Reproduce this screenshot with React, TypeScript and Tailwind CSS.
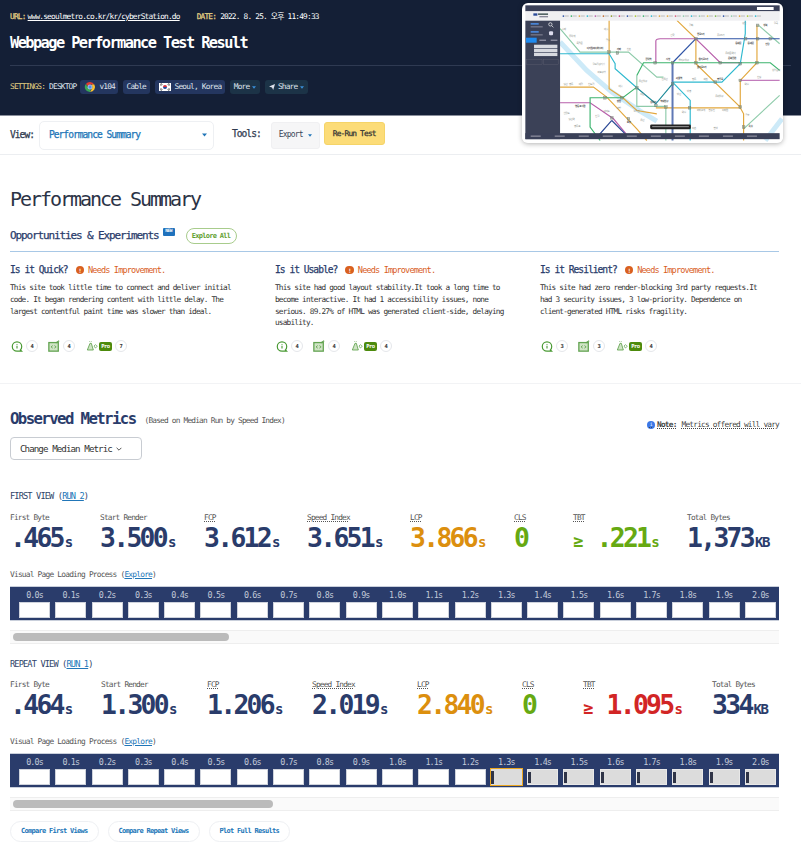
import React from "react";

const Chrome = () => (
  <svg viewBox="0 0 24 24" className="w-[12px] h-[12px]">
    <path d="M12 2a10 10 0 0 1 8.7 5H12a5 5 0 0 0-4.6 3L3.8 5.8A10 10 0 0 1 12 2z" fill="#e33b2e" />
    <path d="M20.7 7A10 10 0 0 1 12 22l4.3-7.5A5 5 0 0 0 16.3 9.5L15.5 7z" fill="#fbc02d" />
    <path d="M12 22A10 10 0 0 1 3.8 5.8l4.3 7.7A5 5 0 0 0 13.5 17z" fill="#3ba755" />
    <circle cx="12" cy="12" r="4.2" fill="#4a8df0" stroke="#fff" strokeWidth="1.2" />
  </svg>
);

const Flag = () => (
  <svg viewBox="0 0 24 16" className="w-[12px] h-[8px]">
    <rect width="24" height="16" fill="#fff" />
    <path d="M8 8a4 4 0 0 1 8 0z" fill="#d32f3f" />
    <path d="M8 8a4 4 0 0 0 8 0z" fill="#1f4a9c" />
    <path d="M2 3l4-2M3 5l4-2M18 1l4 2M17 3l4 2M2 13l4 2M3 11l4 2M18 15l4-2M17 13l4-2" stroke="#111" strokeWidth="1.2" />
  </svg>
);

const Caret = ({ className }: { className: string }) => (
  <svg viewBox="0 0 10 6" className={className}>
    <path d="M0 0h10L5 6z" fill="currentColor" />
  </svg>
);

const IconInfo = () => (
  <svg viewBox="0 0 14 14" className="w-[12px] h-[13px]" fill="none" stroke="#4a9a34">
    <path d="M11.5 12.5H7a5.5 5.5 0 1 1 5.5-5.5c0 2-.4 3-1.5 4l1.5 1.5z" strokeWidth="1.4" />
    <path d="M7 6.2v3.2M7 4v1" strokeWidth="1.3" />
  </svg>
);

const IconCode = () => (
  <svg viewBox="0 0 14 14" className="w-[12px] h-[12px]" fill="none" stroke="#62a350">
    <rect x="1" y="3" width="11" height="10" strokeWidth="1.5" fill="#cfe4c5" />
    <path d="M5.5 6.5 3.5 8l2 1.5M7.5 6.5l2 1.5-2 1.5" strokeWidth="1" />
    <path d="M9 3.5 13 .8" strokeWidth="1.4" />
  </svg>
);

const IconCone = () => (
  <svg viewBox="0 0 18 16" className="w-[12px] h-[12px]" fill="none" stroke="#62a350">
    <path d="M6 4 2 14h9L8 4z" strokeWidth="1.3" fill="#cfe4c5" />
    <path d="M5 1l1 1M8 .8 7.6 2" strokeWidth="1" />
    <path d="M12 8l2-2 3 2.5-3 2.5z" strokeWidth="1.1" />
  </svg>
);

const Count = ({ n }: { n: number }) => (
  <span className="w-[12px] h-[12px] rounded-full border border-[#e5e7eb] flex items-center justify-center text-[5.5px] font-bold text-[#333]">{n}</span>
);

const Badge = () => (
  <span className="w-[8.5px] h-[8.5px] rounded-full bg-[#d9601f] text-white flex items-center justify-center text-[6px] font-bold">!</span>
);

const insights = [
  {
    title: "Is it Quick?",
    body: "This site took little time to connect and deliver initial code. It began rendering content with little delay. The largest contentful paint time was slower than ideal.",
    c: [4, 4, 7],
  },
  {
    title: "Is it Usable?",
    body: "This site had good layout stability.It took a long time to become interactive. It had 1 accessibility issues, none serious. 89.27% of HTML was generated client-side, delaying usability.",
    c: [4, 4, 4],
  },
  {
    title: "Is it Resilient?",
    body: "This site had zero render-blocking 3rd party requests.It had 3 security issues, 3 low-priority. Dependence on client-generated HTML risks fragility.",
    c: [3, 3, 4],
  },
];

type M = { label: string; value: string; unit: string; color: string; w: string; dotted?: boolean; prefix?: string };

const NAVY = "text-[#2a3c6b]";
const first: M[] = [
  { label: "First Byte", value: ".465", unit: "s", color: NAVY, w: "w-[90px]" },
  { label: "Start Render", value: "3.500", unit: "s", color: NAVY, w: "w-[104px]" },
  { label: "FCP", value: "3.612", unit: "s", color: NAVY, w: "w-[103px]", dotted: true },
  { label: "Speed Index", value: "3.651", unit: "s", color: NAVY, w: "w-[103px]", dotted: true },
  { label: "LCP", value: "3.866", unit: "s", color: "text-[#dc8f0e]", w: "w-[104px]", dotted: true },
  { label: "CLS", value: "0", unit: "", color: "text-[#66a912]", w: "w-[59px]", dotted: true },
  { label: "TBT", value: ".221", unit: "s", color: "text-[#66a912]", w: "w-[114px]", dotted: true, prefix: "mr-[15px]" },
  { label: "Total Bytes", value: "1,373", unit: "KB", color: NAVY, w: "w-[90px]" },
];
const repeat: M[] = [
  { label: "First Byte", value: ".464", unit: "s", color: NAVY, w: "w-[91px]" },
  { label: "Start Render", value: "1.300", unit: "s", color: NAVY, w: "w-[106px]" },
  { label: "FCP", value: "1.206", unit: "s", color: NAVY, w: "w-[105px]", dotted: true },
  { label: "Speed Index", value: "2.019", unit: "s", color: NAVY, w: "w-[105px]", dotted: true },
  { label: "LCP", value: "2.840", unit: "s", color: "text-[#dc8f0e]", w: "w-[105px]", dotted: true },
  { label: "CLS", value: "0", unit: "", color: "text-[#66a912]", w: "w-[61px]", dotted: true },
  { label: "TBT", value: "1.095", unit: "s", color: "text-[#d22525]", w: "w-[129px]", dotted: true, prefix: "mr-[15px]" },
  { label: "Total Bytes", value: "334", unit: "KB", color: NAVY, w: "w-[70px]" },
];

const Metrics = ({ items }: { items: M[] }) => (
  <div className="flex">
    {items.map((m) => (
      <div key={m.label} className={`${m.w} shrink-0`}>
        <div className="h-[11px] leading-[11px] text-[7.8px] text-[#555]">
          <span className={m.dotted ? "underline decoration-dotted" : ""}>{m.label}</span>
        </div>
        <div className={`${m.color} h-[33px] leading-[29px] font-bold text-[26.4px] whitespace-nowrap`}>
          {m.prefix && <span className={`text-[17px] ${m.prefix}`}>≥</span>}
          <span>{m.value}</span>
          {m.unit && <span className="text-[14px] ml-[2px]">{m.unit}</span>}
        </div>
      </div>
    ))}
  </div>
);

const times = Array.from({ length: 21 }, (_, i) => (i / 10).toFixed(1) + "s");

const Film = ({ changeAt }: { changeAt?: number }) => (
  <div className="h-[35px] bg-[#2a3c6b] pl-[9px] flex gap-[5.3px] pt-[3px] border-y border-[#c9cfdb]">
    {times.map((t, i) => {
      const changed = changeAt !== undefined && i >= changeAt;
      const hi = changeAt === i;
      return (
        <div key={t} className="w-[31px] shrink-0 flex flex-col items-center">
          <span className="h-[12px] leading-[11px] text-[8.4px] text-[#c3cad9]">{t}</span>
          <div
            className={
              hi
                ? "w-[33px] h-[18px] -mt-[1px] border border-[#eba620] bg-[#dcdcdc] flex"
                : changed
                ? "w-[31px] h-[16px] border border-[#e8e8e8] bg-[#dcdcdc] flex"
                : "w-[31px] h-[16px] border border-[#cfd3dc] bg-white"
            }
          >
            {changed && <div className="w-[3px] mt-[2px] mb-[1px] bg-[#2f3447]" />}
          </div>
        </div>
      );
    })}
  </div>
);

const Scroll = ({ thumb }: { thumb: string }) => (
  <div className="mt-[9px] h-[14px] bg-[#fafafa] border-y border-[#eeeeee] pl-[3px] flex items-center">
    <div className={`${thumb} h-[8px] rounded-full bg-[#bbbbbb]`} />
  </div>
);

const labels: [number, number, string, boolean?][] = [
  [260, 145, "디지털미디어시티", true], [350, 148, "가좌", true], [380, 150, "신촌"], [435, 180, "공덕역", true],
  [497, 180, "시청", true], [535, 182, "을지로입구"], [595, 180, "을지로3가", true], [590, 105, "종로3가", true],
  [650, 108, "종로5가"], [705, 130, "동대문", true], [742, 130, "동대문", true], [795, 133, "신당", true],
  [675, 162, "동대문역사"], [683, 175, "문화공원", true], [590, 203, "을지로4가", true], [650, 238, "충무로", true],
  [575, 240, "명동"], [610, 240, "회현"], [527, 237, "서울역", true], [416, 245, "용산입구"], [484, 240, "신용산"],
  [733, 255, "약수"], [770, 232, "신당"], [815, 212, "상왕십리"], [277, 195, "월드컵경기장"], [292, 218, "마포구청"],
  [190, 254, "당산"], [207, 254, "영등"], [236, 254, "대림"], [264, 254, "신도림"],
  [350, 305, "합정", true], [355, 260, "대흥"], [420, 285, "이촌"], [450, 308, "삼각지", true], [480, 305, "숙대입구", true],
  [400, 335, "노량진"], [545, 337, "약수"], [590, 333, "버티고개"], [625, 333, "한강진"], [665, 333, "이태원"],
  [645, 290, "동대입구"], [560, 275, "남영"], [530, 285, "남산"], [225, 320, "영등포시장", true], [310, 335, "여의도"],
  [350, 325, "대방"], [285, 350, "신길"], [380, 368, "효창", true], [420, 362, "용산"], [640, 387, "한남"], [735, 348, "금호"],
  [575, 387, "이촌"], [745, 380, "옥수", true], [190, 340, "선유도"], [205, 358, "당산역"],
  [222, 380, "영등포"], [185, 90, "홍제"], [207, 110, "무악재"], [229, 130, "독립문"], [312, 90, "대흥"], [317, 122, "공덕"],
  [566, 78, "광화"], [510, 107, "안국"], [725, 70, "성신"], [789, 78, "성북", true], [820, 72, "월곡"],
];

const MapShot = () => (
  <svg viewBox="66 8 782 418" className="w-full h-full block" fill="none">
    <rect x="66" y="8" width="782" height="418" fill="#fff" />
    <path d="M180 125 L260 210 L335 275 L420 332 L470 362" stroke="#cdeaf8" strokeWidth="15" />
    <path d="M845 355 L795 420" stroke="#cdeaf8" strokeWidth="15" />
    <g strokeWidth="3.5">
      <path d="M180 85 L240 155 H385 L470 230 H490" stroke="#8ecbaa" />
      <path d="M410 225 V318 H497 V420" stroke="#8ecbaa" />
      <path d="M730 385 L838 285" stroke="#8ecbaa" />
      <path d="M775 75 L838 130" stroke="#8ecbaa" />
      <path d="M327 60 V265 L368 292 L410 330 L470 340" stroke="#e2a83e" />
      <path d="M180 260 H280 L320 290 L410 385 L440 420" stroke="#e2a83e" />
      <path d="M530 60 L587 115 V190 L720 320 V240 L770 187 V75" stroke="#e2a83e" />
      <path d="M467 322 H720 L730 340 V420" stroke="#e2a83e" />
      <path d="M587 115 H838" stroke="#2d52a5" />
      <path d="M587 115 L517 187" stroke="#2d52a5" />
      <path d="M517 187 V420" stroke="#5f78b5" strokeWidth="6" />
      <path d="M467 187 V122 Q467 115 480 115 H587 L660 187 H725" stroke="#b85fab" />
      <path d="M720 240 H838" stroke="#c27cbc" />
      <path d="M180 307 H270 L340 355 L378 400" stroke="#b85fab" />
      <path d="M410 225 L430 187 H810 L838 210" stroke="#3cb46e" />
      <path d="M410 260 L368 292 H270 V380 L300 420" stroke="#3cb46e" />
      <path d="M180 160 H327 L345 190 V205 L410 262" stroke="#2fb9cf" />
      <path d="M517 245 H665 L720 190 L735 100 V60" stroke="#2fb9cf" />
      <path d="M517 245 L570 300 V420" stroke="#2fb9cf" />
      <path d="M410 262 L467 310 L517 250" stroke="#1d8a99" />
      <path d="M335 360 L298 402 M335 360 L375 400" stroke="#2d4a96" />
    </g>
    <g fill="#7c8a7c" stroke="#6a756a" strokeWidth="1">
      {[[327,155],[352,158],[410,262],[465,187],[517,187],[587,115],[587,187],[660,187],[720,190],[770,187],[736,115],[772,115],[810,115],[720,240],[645,245],[517,250],[467,315],[497,320],[568,322],[720,320],[730,380],[365,292],[315,292],[335,352],[385,355],[772,75]].map(([x, y], i) => (
        <rect key={i} x={x - 4} y={y - 4} width="8" height="8" fillOpacity=".55" />
      ))}
    </g>
    <g style={{ fontFamily: "'Noto Sans CJK KR', sans-serif" }}>
      {labels.map(([x, y, t, b], i) => (
        <text key={i} x={x} y={y} fontSize="7.5" fontWeight={b ? 700 : 400} fill={b ? "#444" : "#8a8f8a"}>{t}</text>
      ))}
    </g>
    <rect x="76" y="15" width="762" height="18" fill="#3a4058" />
    <rect x="770" y="20" width="50" height="9" fill="#fff" />
    <rect x="76" y="33" width="762" height="28" fill="#f0f0f2" />
    <rect x="100" y="39" width="12" height="7" fill="#2a4a98" />
    <rect x="114" y="39" width="30" height="5" fill="#566" />
    <rect x="118" y="47" width="26" height="4" fill="#889" />
    {["#2d52a5","#3cb46e","#e2a83e","#2fb9cf","#b85fab","#c0692c","#8a9a2a","#c8447a","#2d52a5","#a8c830","#3cb46e","#2fb9cf","#e2a83e","#e2a83e","#d95c7a","#8ecbaa","#2fb9cf","#8ecbaa","#e2c83e","#7ab648","#2d52a5","#8ecbaa","#e2a83e","#a8c830","#2fb9cf"].map((c, i) => (
      <g key={i}>
        <circle cx={190 + i * 24} cy="47" r="2.6" fill={c} />
        <rect x={194 + i * 24} y="45.5" width="12" height="3" fill="#bbb" />
      </g>
    ))}
    <rect x="76" y="61" width="104" height="355" fill="#3b4157" />
    <rect x="92" y="68" width="24" height="5" fill="#4a86d8" />
    <rect x="92" y="78" width="36" height="3" fill="#889" />
    <rect x="92" y="92" width="24" height="5" fill="#4a86d8" />
    <rect x="92" y="102" width="36" height="3" fill="#889" />
    <circle cx="151" cy="72" r="5" stroke="#fff" strokeWidth="2" />
    <path d="M155 76l5 5" stroke="#fff" strokeWidth="2" />
    <rect x="147" y="93" width="12" height="12" rx="3" fill="#dde" />
    <rect x="78" y="112" width="32" height="15" fill="#1f8bf0" />
    <rect x="118" y="118" width="20" height="3" fill="#aab" />
    <rect x="152" y="118" width="20" height="3" fill="#aab" />
    <rect x="102" y="133" width="70" height="10" fill="#d8dae0" />
    <rect x="102" y="145" width="70" height="10" fill="#d8dae0" />
    <rect x="102" y="157" width="70" height="10" fill="#d8dae0" />
    <rect x="80" y="178" width="46" height="14" stroke="#667" />
    <rect x="130" y="178" width="46" height="14" stroke="#667" />
    <rect x="76" y="398" width="762" height="18" fill="#3a4058" />
    {Array.from({ length: 10 }, (_, i) => (
      <rect key={i} x={92 + i * 72} y="405" width="30" height="4" fill="#889" />
    ))}
    <rect x="450" y="372" width="122" height="14" rx="4" fill="#222" />
    <rect x="456" y="377" width="110" height="3" fill="#999" />
  </svg>
);

const Pill = ({ children }: { children: React.ReactNode }) => (
  <span className="h-[21px] px-[10px] rounded-full border border-[#eef0f3] flex items-center text-[7px] font-bold text-[#2176b8]">{children}</span>
);

const STROKE = "[-webkit-text-stroke:0.25px_currentColor]";

export default function App() {
  return (
    <div className="relative w-[801px] h-[846px] overflow-hidden bg-white font-['DejaVu_Sans_Mono','Noto_Sans_CJK_KR',monospace] [&_*]:tracking-[-0.102em]">
      <header className="h-[116px] bg-[#141f36] border-b border-[#8a8f9c] px-[10px]">
        <div className="pt-[12px] h-[29px] flex text-[7.8px] leading-[10px] text-white">
          <span className={`text-[#e6d284] ${STROKE}`}>URL:</span>
          <a className="underline ml-[2px]">www.seoulmetro.co.kr/kr/cyberStation.do</a>
          <span className={`text-[#e6d284] ml-[17px] ${STROKE}`}>DATE:</span>
          <span className="ml-[4px]">2022. 8. 25. 오후 11:49:33</span>
        </div>
        <h1 className="text-[15.3px] leading-[28px] font-bold text-white">Webpage Performance Test Result</h1>
        <div className="mt-[8px] h-px bg-[#2f3a52]" />
        <div className="mt-[14px] flex items-center text-[7.8px] text-[#dfe3ec]">
          <span className="text-[#e6d284]">SETTINGS:</span>
          <span className="ml-[4px]">DESKTOP</span>
          <span className="ml-[4px] h-[14px] pl-[4px] pr-[3px] rounded-[3px] bg-[#24365f] flex items-center gap-[3px]"><Chrome /><span>v104</span></span>
          <span className="ml-[5px] h-[14px] px-[3.5px] rounded-[3px] bg-[#24365f] flex items-center">Cable</span>
          <span className="ml-[5px] h-[14px] px-[4px] rounded-[3px] bg-[#24365f] flex items-center gap-[4px]"><Flag /><span>Seoul, Korea</span></span>
          <span className="ml-[5px] h-[14px] px-[3.5px] rounded-[3px] bg-[#1c3347] flex items-center gap-[3px]"><span>More</span><Caret className="w-[4px] h-[3px] text-[#3a8fd8]" /></span>
          <span className="ml-[5px] h-[14px] px-[4px] rounded-[3px] bg-[#1c3347] flex items-center gap-[3px]">
            <svg viewBox="0 0 10 10" className="w-[6px] h-[6px]"><path d="M0 4 10 0 7 10 5 6z" fill="#dfe3ec" /></svg>
            <span>Share</span>
            <Caret className="w-[4px] h-[3px] text-[#3a8fd8]" />
          </span>
        </div>
      </header>

      <div className="absolute left-[522px] top-[3px] w-[261px] h-[139.5px] rounded-[6px] overflow-hidden shadow-[0_1px_5px_rgba(0,0,0,0.3)]">
        <MapShot />
      </div>

      <nav className="h-[39px] border-b border-[#eceef1] px-[10px] flex items-center">
        <span className={`text-[9.6px] text-[#2f3a4f] ${STROKE}`}>View:</span>
        <div className="ml-[5px] w-[175px] h-[29px] rounded-[5px] border border-[#eef0f3] flex items-center justify-between pl-[9px] pr-[6px]">
          <span className={`text-[9.6px] text-[#2176b8] ${STROKE}`}>Performance Summary</span>
          <Caret className="w-[5px] h-[4px] text-[#2176b8]" />
        </div>
        <span className={`ml-[18px] -mt-[2px] text-[9.6px] text-[#2f3a4f] ${STROKE}`}>Tools:</span>
        <div className="ml-[10px] w-[49px] h-[27px] rounded-[3px] bg-[#f6f6f7] border border-[#f0f0f2] flex items-center justify-center gap-[5px]">
          <span className="text-[8px] text-[#3a4658]">Export</span>
          <Caret className="w-[4px] h-[3px] text-[#2176b8]" />
        </div>
        <div className={`ml-[4px] w-[61px] h-[23px] -mt-[3px] rounded-[3px] bg-[#fcdc78] border border-[#f5d468] flex items-center justify-center text-[7.8px] text-[#333] ${STROKE}`}>Re-Run Test</div>
      </nav>

      <main className="px-[10px]">
        <h2 className="mt-[30px] h-[28px] leading-[28px] text-[20px] text-[#2b3346]">Performance Summary</h2>
        <div className="mt-[11px] h-[24px] flex items-center">
          <h3 className={`text-[11px] ${STROKE} ${NAVY}`}>Opportunities &amp; Experiments</h3>
          <span className="ml-[4px] -mt-[9px] w-[12px] h-[8px] rounded-[1px] bg-[#1f72bd] text-white text-[4.5px] font-bold flex items-center justify-center">NEW</span>
          <span className="ml-[11px] h-[16px] w-[51px] rounded-full border border-[#a8cc8c] flex items-center justify-center text-[7px] font-bold text-[#5f9e2f]">Explore All</span>
        </div>
        <div className="mt-[3px] w-[769px] h-px bg-[#a8c8e6]" />
        <div className="grid grid-cols-[265px_265px_239px] w-[769px]">
          {insights.map((s) => (
            <section key={s.title}>
              <div className="mt-[12px] h-[12px] flex items-center">
                <span className={`text-[9.6px] ${STROKE} ${NAVY}`}>{s.title}</span>
                <span className="ml-[8px]"><Badge /></span>
                <span className="ml-[4px] text-[8.6px] text-[#d9601f]">Needs Improvement.</span>
              </div>
              <p className="mt-[6px] w-[231px] h-[47px] text-[7.76px] leading-[11.8px] text-[#333]">{s.body}</p>
              <div className="mt-[10px] h-[14px] flex items-center">
                <span className="ml-[1px]"><IconInfo /></span>
                <span className="ml-[3px]"><Count n={s.c[0]} /></span>
                <span className="ml-[10px]"><IconCode /></span>
                <span className="ml-[3px]"><Count n={s.c[1]} /></span>
                <span className="ml-[11px]"><IconCone /></span>
                <span className="ml-[1px] w-[13px] h-[9px] rounded-[2px] bg-[#4c8a0c] text-white text-[5.5px] font-bold flex items-center justify-center">Pro</span>
                <span className="ml-[3px]"><Count n={s.c[2]} /></span>
              </div>
            </section>
          ))}
        </div>
      </main>

      <div className="mt-[30px] h-px bg-[#f2f3f5]" />

      <section className="relative px-[10px]">
        <div className="mt-[25px] h-[20px] flex items-center">
          <h2 className={`text-[15.7px] font-bold ${NAVY}`}>Observed Metrics</h2>
          <span className="ml-[9px] mt-[3px] text-[7.8px] text-[#555]">(Based on Median Run by Speed Index)</span>
          <span className="ml-auto mr-[12px] mt-[12px] flex items-center gap-[2px] text-[7.8px] text-[#444] underline decoration-dotted">
            <span className="w-[8px] h-[8px] rounded-full bg-[#3b78e7] text-white text-[5px] flex items-center justify-center no-underline">i</span>
            <b>Note:</b><span className="ml-[3px]">Metrics offered will vary</span>
          </span>
        </div>
        <div className="mt-[8px] w-[132px] h-[23px] rounded-[4px] border border-[#c8ccd2] flex items-center pl-[9px] gap-[4px]">
          <span className="text-[9.2px] text-[#333]">Change Median Metric</span>
          <svg viewBox="0 0 10 6" className="w-[6px] h-[4px]" fill="none" stroke="#333"><path d="M1 1l4 4 4-4" strokeWidth="1.4" /></svg>
        </div>

        <div className="mt-[30px] h-[12px] leading-[12px] text-[8.7px] text-[#2f4468]">FIRST VIEW (<a className="underline text-[#2176b8]">RUN 2</a>)</div>
        <div className="mt-[10px]"><Metrics items={first} /></div>
        <div className="mt-[13px] h-[12px] leading-[12px] text-[7.9px] text-[#555]">Visual Page Loading Process (<a className="underline text-[#2176b8]">Explore</a>)</div>
        <div className="mt-[5px] w-[769px]">
          <Film />
          <Scroll thumb="w-[216px]" />
        </div>

        <div className="mt-[14px] h-[12px] leading-[12px] text-[8.7px] text-[#2f4468]">REPEAT VIEW (<a className="underline text-[#2176b8]">RUN 1</a>)</div>
        <div className="mt-[9px]"><Metrics items={repeat} /></div>
        <div className="mt-[13px] h-[12px] leading-[12px] text-[7.9px] text-[#555]">Visual Page Loading Process (<a className="underline text-[#2176b8]">Explore</a>)</div>
        <div className="mt-[5px] w-[769px]">
          <Film changeAt={13} />
          <Scroll thumb="w-[260px]" />
        </div>
        <div className="mt-[10px] flex gap-[9px]">
          <Pill>Compare First Views</Pill>
          <Pill>Compare Repeat Views</Pill>
          <Pill>Plot Full Results</Pill>
        </div>
      </section>
    </div>
  );
}
